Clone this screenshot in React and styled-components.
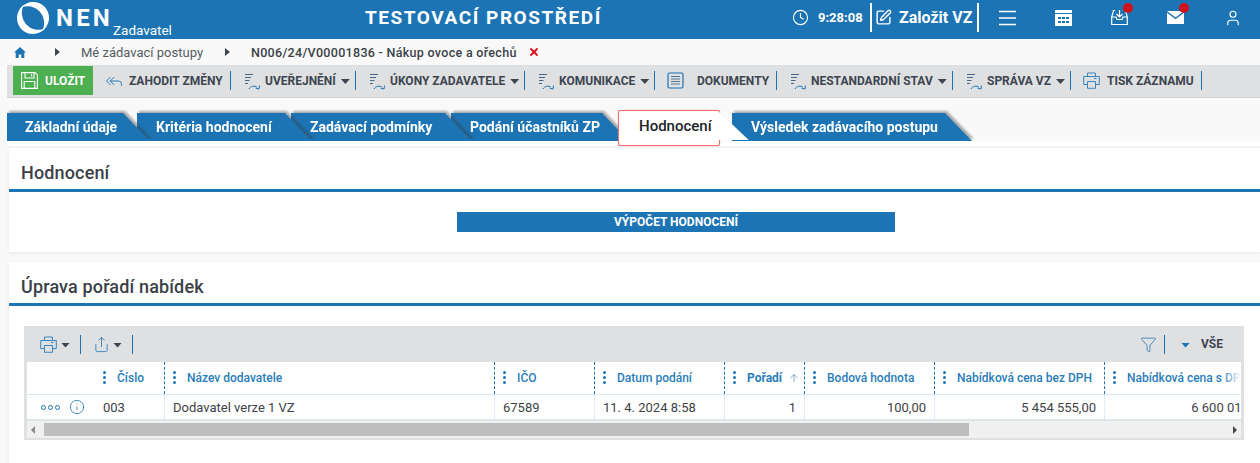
import React from "react";
import styled, { createGlobalStyle } from "styled-components";
import { ReplyAll, Share, Funnel, Info, Clock, SquarePen, User, ArrowUp, X } from "lucide-react";

const Global = createGlobalStyle`
  html, body { margin: 0; padding: 0; background: #f9f9f9; height: 100%; overflow: hidden; }
  * { box-sizing: border-box; }
  body { font-family: Roboto, "Liberation Sans", sans-serif; color: #3d4650; }
`;

const BLUE = "#1c74b4";

const Page = styled.div`width: 1260px; height: 463px; overflow: hidden; display: flex; flex-direction: column;`;

const Header = styled.header`
  height: 39px; padding-bottom: 4px; background: ${BLUE}; color: #fff; display: grid;
  grid-template-columns: 365px 425px 470px; align-items: center; flex: none;
`;
const Brand = styled.div`display: flex; align-items: flex-start; padding-left: 15px; height: 35px;`;
const BrandName = styled.span`font-size: 24px; font-weight: 700; letter-spacing: 3.2px; margin: 3px 0 0 5px; line-height: 30px;`;
const BrandRole = styled.span`font-size: 13.5px; line-height: 16px; margin: 22px 0 0 0;`;
const EnvTitle = styled.div`font-size: 19px; font-weight: 700; letter-spacing: 1.55px; white-space: nowrap;`;
const HeaderRight = styled.div`display: flex; align-items: center; height: 35px; padding-left: 2px;`;
const TimeText = styled.span`font-size: 13px; font-weight: 700; margin: 0 8px 0 9px; width: 44px; flex: none;`;
const Create = styled.div`
  display: flex; align-items: center; gap: 7px; height: 29px; width: 109px; padding-left: 3px; flex: none;
  border-left: 2px solid #fff; border-right: 2px solid #fff; font-size: 16px; font-weight: 700; white-space: nowrap;
`;
const HeadIcons = styled.div`display: flex; align-items: center; padding-left: 20px;`;
const HeadIcon = styled.span`
  position: relative; display: flex; width: ${(p) => p.$w ?? 56}px; height: 20px; align-items: center; flex: none;
  margin-left: ${(p) => p.$ml ?? 0}px;
`;
const Dot = styled.i`
  position: absolute; top: -5px; left: ${(p) => p.$l}px; width: 10px; height: 10px; border-radius: 50%; background: #d0121b;
`;

const Crumbs = styled.nav`
  height: 26px; flex: none; display: flex; align-items: center; font-size: 13px; color: #555c63; padding-left: 14px;
`;
const Tri = styled.span`
  width: 0; height: 0; border-left: 5px solid #3d4650; border-top: 4px solid transparent; border-bottom: 4px solid transparent;
  margin: 0 ${(p) => p.$r}px 0 ${(p) => p.$l}px;
`;
const CrumbStrong = styled.b`font-weight: 500; font-size: 12.5px; color: #3a4148; letter-spacing: 0.3px;`;
const CrumbClose = styled.span`display: flex; margin-left: 11px; color: #e0101a;`;

const Toolbar = styled.div`
  height: 33px; margin-left: 7px; background: #dfe0e2; border-bottom: 1px solid #d2d3d5; flex: none;
  display: flex; align-items: center; padding: 0 0 1px 6px;
`;
const SaveBtn = styled.div`
  width: 80px; height: 29px; background: #4caf50; color: #fff; font-weight: 700; font-size: 12px;
  display: flex; align-items: center; gap: 7px; padding-left: 8px; margin-right: 12px; flex: none;
`;
const ToolItem = styled.div`
  display: flex; align-items: center; height: 19px; font-size: 12px; font-weight: 700; color: #3d4650; white-space: nowrap;
  gap: ${(p) => p.$gap ?? 5}px; width: ${(p) => p.$w}px; margin-right: 5px; flex: none;
  border-right: 1px solid ${BLUE};
  padding-left: ${(p) => p.$pl ?? 9}px;
`;
const Caret = styled.span`
  display: inline-block; width: 9px; height: 5px; margin-left: ${(p) => p.$ml ?? 0}px; flex: none;
  background: ${(p) => p.$c || "#3d4650"}; clip-path: polygon(0 0, 100% 0, 50% 100%);
  position: relative; top: 1px;
`;

const TabsRow = styled.div`
  display: flex; margin: 15px 0 0 7px; height: 35px; flex: none; align-items: flex-start; position: relative;
  background: linear-gradient(transparent 28px, #fff 28px, #fff 33px, #f4f4f4 33px);
`;
const TabWrap = styled.div`
  position: relative; flex: none; width: ${(p) => p.$w}px; margin: 0 ${(p) => p.$mr ?? 0}px 0 ${(p) => p.$ml ?? 0}px; z-index: ${(p) => p.$z};
  filter: drop-shadow(2px -1.5px 1px rgba(60, 60, 60, 0.42));
`;
const TabBody = styled.div`
  height: 28px; background: ${BLUE}; color: #fff; font-size: 14px; font-weight: 700; white-space: nowrap;
  line-height: 29px; padding-left: ${(p) => p.$pl}px;
  clip-path: polygon(0 0, calc(100% - 27px) 0, 100% 100%, 0 100%);
`;
const ActiveTab = styled.div`
  position: relative; z-index: 20; flex: none; width: 102px; height: 36px; margin: -3px 0 0 0; background: #fff; border: 1px solid #f26c74; border-radius: 2px;
  font-size: 15px; font-weight: 500; color: #202428; padding: 6px 0 0 20px; line-height: 18px; white-space: nowrap;
  box-shadow: 0 0 1px #f26c74;
`;
const ActiveFold = styled.div`
  position: absolute; left: 100%; top: 1px; width: 30px; height: 28px; background: linear-gradient(45deg, #fff 48%, #cfcfcf 52%, #f9f9f9 62%);
  clip-path: polygon(0 0, 100% 100%, 0 100%);
`;

const Card = styled.section`
  margin-left: 9px; background: #fff; box-shadow: 0 1px 3px rgba(0,0,0,.08); height: ${(p) => p.$h}px; flex: none;
  margin-bottom: ${(p) => p.$mb ?? 0}px;
`;
const CardTitle = styled.h2`
  margin: 0; font-size: 18px; font-weight: 500; color: #3a4047; height: 44px; line-height: 1; padding: 16px 0 0 12px;
  border-bottom: 3px solid ${BLUE};
  letter-spacing: 0.15px;
`;
const ActionRow = styled.div`display: flex; justify-content: center; padding: 20px 0 0 84px; margin-left: -1px;`;
const ActionBtn = styled.div`
  width: 438px; height: 20px; background: ${BLUE}; color: #fff; font-size: 12px; font-weight: 700; text-align: center; line-height: 21px;
`;

const GridBox = styled.div`
  margin: 20px 16px 0 15px; background: #dfe0e2; height: 114px; padding: 0 3px 3px 3px;
`;
const GridTools = styled.div`height: 36px; display: flex; align-items: center; padding-left: 13px; color: ${BLUE};`;
const GridToolBtn = styled.div`
  display: flex; align-items: center; height: 19px; width: ${(p) => p.$w}px; border-right: 1px solid ${BLUE}; margin-right: ${(p) => p.$mr}px;
`;
const Spacer = styled.div`flex: 1;`;
const AllLabel = styled.span`
  font-size: 12px; font-weight: 700; color: #3d4650; margin: 0 18px 0 7px; height: 19px; padding-left: 16px;
  border-left: 1px solid ${BLUE}; display: flex; align-items: center; gap: 11px;
`;
const Table = styled.div`background: #fff; position: relative; overflow: hidden;`;
const Row = styled.div`
  display: grid; grid-template-columns: 68px 69px 330px 100px 130px 80px 130px 170px 170px; height: ${(p) => p.$h}px;
  border-bottom: 1px solid #dce8f0; width: 1247px;
`;
const HeadCell = styled.div`
  display: flex; align-items: center; font-size: 12px; font-weight: ${(p) => (p.$b ? 700 : 500)}; color: #2a7db9; white-space: nowrap; overflow: hidden;
  padding-left: 8px; border-left: ${(p) => (p.$first ? "none" : `1px dashed ${BLUE}`)};
`;
const Grip = styled.span`
  display: flex; flex-direction: column; gap: 2px; margin: -1px 11px 0 0; flex: none;
  i { display: block; width: 3px; height: 3px; border-radius: 50%; background: ${BLUE}; }
`;
const Cell = styled.div`
  font-size: 13px; color: #3d4246; white-space: nowrap; overflow: hidden; display: flex; align-items: center;
  padding: 0 ${(p) => (p.$right ? 8 : 0)}px 0 ${(p) => p.$pl ?? 8}px; border-left: ${(p) => (p.$first ? "none" : "1px dotted #c4dced")};
  justify-content: ${(p) => (p.$right ? "flex-end" : "flex-start")};
`;
const HeadFade = styled.div`
  position: absolute; right: 0; top: 0; height: 32px; width: 20px; background: linear-gradient(90deg, rgba(255,255,255,0), #fff);
`;
const Rings = styled.span`display: flex; gap: 2px; margin: 0 9px 0 6px; i { width: 5px; height: 5px; border: 1px solid ${BLUE}; border-radius: 50%; display: block; }`;
const Scrollbar = styled.div`height: 18px; background: #f0f0f0; display: flex; align-items: center; border-top: 1px solid #e4e4e4;`;
const ScrollThumb = styled.div`width: 925px; height: 13px; background: #bebebe; margin-left: 5px;`;
const ArrowSlot = styled.span`width: 12px; display: flex; justify-content: center; flex: none;`;
const ScrollTri = styled.span`
  width: 0; height: 0; border-top: 4px solid transparent; border-bottom: 4px solid transparent;
  ${(p) => (p.$left ? "border-right: 4px solid #8a8a8a;" : "border-left: 4px solid #444;")}
`;

const crescent = "M-9 -13.2 A16 16 0 1 0 12 10.6 A16.8 16.8 0 0 1 -9 -13.2 Z";
const Logo = () => (
  <svg width="36" height="36" viewBox="-18 -18 36 36" style={{ flex: "none" }}>
    <path d={crescent} fill="#fff" />
    <path d={crescent} fill="#fff" transform="rotate(180)" />
  </svg>
);
const FlowIcon = () => (
  <svg width="15" height="17" viewBox="0 0 15 17" fill="none" style={{ flex: "none", marginTop: 2 }}>
    <path d="M0 1.5h8M0 4.5h6M0 7.5h4.5M0 10.5h3" stroke="#44688a" strokeWidth="1" />
    <path d="M4 16c1.5-3 6-3.8 8-1.6M14.5 12.5l-.5 3.5-3.3-.8" stroke="#1c74b4" strokeWidth="1" />
  </svg>
);
const SaveIcon = () => (
  <svg width="17" height="17" viewBox="0 0 17 17" fill="none" stroke="#fff" strokeWidth="1.1" style={{ flex: "none" }}>
    <path d="M.6.6h13.5l2.3 2.3v13.5H.6zM4 .6v5.4h9V.6M3.2 16.4V9.5h10.6v6.9M10.5 2v2.5" />
  </svg>
);
const DocIcon = () => (
  <svg width="17" height="17" viewBox="0 0 17 17" fill="none" stroke="#1c74b4" style={{ flex: "none" }}>
    <rect x="1" y="1" width="15" height="15" rx="1.5" strokeWidth="1.2" />
    <path d="M4 4.5h9M4 7h9M4 9.5h9M4 12h9" stroke="#44688a" strokeWidth="0.9" />
  </svg>
);
const MenuIcon = () => (
  <svg width="17" height="16" viewBox="0 0 17 16" fill="none" stroke="#fff" strokeWidth="1.6"><path d="M0 1.5h17M0 8h17M0 14.5h17" /></svg>
);
const CalIcon = () => (
  <svg width="17" height="16" viewBox="0 0 17 16"><path fill="#fff" d="M0 0h17v16H0z" /><path fill="#1c74b4" d="M0 3h17v1H0zM3 7h3v2H3zM7 7h3v2H7zM11 7h3v2h-3zM3 11h3v2H3zM7 11h3v2H7zM11 11h3v2h-3z" /></svg>
);
const InboxIcon = () => (
  <svg width="17" height="17" viewBox="0 0 17 17" fill="none" stroke="#fff" strokeWidth="1.2">
    <path d="M4 1.5H2.5L.7 8v7.5h15.6V8l-1.8-6.5H13M.7 8H5l1 2.5h5L12 8h4.3M8.5 1v7M5.5 5l3 3 3-3" />
  </svg>
);
const MailIcon = () => (
  <svg width="17" height="13" viewBox="0 0 17 13"><path fill="#fff" d="M0 0h17L8.5 6.5zM0 1.8l8.5 6.5L17 1.8V13H0z" /></svg>
);
const TablePrint = () => (
  <svg width="17" height="17" viewBox="0 0 17 17" fill="none" stroke="#3a87bf" strokeWidth="1" style={{ flex: "none" }}>
    <path d="M4.5 4V1h8v3M4 12.5H.7V4.5h15.6v8H13M4.5 9.5h8v6.8h-8zM11 6.5h2.5" />
  </svg>
);

const cols = [
  ["Číslo", false], ["Název dodavatele", false], ["IČO", false], ["Datum podání", false],
  ["Pořadí", true], ["Bodová hodnota", false], ["Nabídková cena bez DPH", false], ["Nabídková cena s DPH", false],
];

export default function App() {
  return (
    <Page>
      <Global />
      <Header>
        <Brand>
          <Logo />
          <BrandName>NEN</BrandName>
          <BrandRole>Zadavatel</BrandRole>
        </Brand>
        <EnvTitle>TESTOVACÍ PROSTŘEDÍ</EnvTitle>
        <HeaderRight>
          <Clock size={17} strokeWidth={1.6} style={{ flex: "none" }} />
          <TimeText>9:28:08</TimeText>
          <Create><SquarePen size={17} strokeWidth={2} style={{ flex: "none" }} />Založit VZ</Create>
          <HeadIcons>
            <HeadIcon><MenuIcon /></HeadIcon>
            <HeadIcon><CalIcon /></HeadIcon>
            <HeadIcon><InboxIcon /><Dot $l={12} /></HeadIcon>
            <HeadIcon><MailIcon /><Dot $l={12} /></HeadIcon>
            <HeadIcon $w={20} $ml={1}><User size={18} strokeWidth={1.5} /></HeadIcon>
          </HeadIcons>
        </HeaderRight>
      </Header>

      <Crumbs>
        <svg width="12" height="11" viewBox="0 0 12 11" style={{ flex: "none" }}><path fill="#1c74b4" d="M6 0l6 5.5h-1.7V11H7.3V7.5H4.7V11H1.7V5.5H0z" /></svg>
        <Tri $l={29} $r={21} />
        Mé zádavací postupy
        <Tri $l={22} $r={21} />
        <CrumbStrong>N006/24/V00001836 - Nákup ovoce a ořechů</CrumbStrong>
        <CrumbClose><X size={12} strokeWidth={3.6} /></CrumbClose>
      </Crumbs>

      <Toolbar>
        <SaveBtn><SaveIcon />ULOŽIT</SaveBtn>
        <ToolItem $w={126} $pl={0} $gap={6}><ReplyAll size={18} strokeWidth={1.2} color="#1c74b4" style={{ flex: "none" }} />ZAHODIT ZMĚNY</ToolItem>
        <ToolItem $w={120}><FlowIcon />UVEŘEJNĚNÍ<Caret /></ToolItem>
        <ToolItem $w={164}><FlowIcon />ÚKONY ZADAVATELE<Caret /></ToolItem>
        <ToolItem $w={125}><FlowIcon />KOMUNIKACE<Caret /></ToolItem>
        <ToolItem $w={117} $pl={7} $gap={13}><DocIcon />DOKUMENTY</ToolItem>
        <ToolItem $w={171}><FlowIcon />NESTANDARDNÍ STAV<Caret /></ToolItem>
        <ToolItem $w={113}><FlowIcon />SPRÁVA VZ<Caret /></ToolItem>
        <ToolItem $w={126} $pl={7} $gap={7}><TablePrint />TISK ZÁZNAMU</ToolItem>
      </Toolbar>

      <TabsRow>
        <TabWrap $w={143} $mr={-13} $z={9}><TabBody $pl={18}>Základní údaje</TabBody></TabWrap>
        <TabWrap $w={175} $mr={-21} $z={8}><TabBody $pl={19}>Kritéria hodnocení</TabBody></TabWrap>
        <TabWrap $w={181} $mr={-21} $z={7}><TabBody $pl={19}>Zadávací podmínky</TabBody></TabWrap>
        <TabWrap $w={178} $mr={-11} $z={6}><TabBody $pl={19}>Podání účastníků ZP</TabBody></TabWrap>
        <ActiveTab>Hodnocení<ActiveFold /></ActiveTab>
        <TabWrap $w={240} $ml={12} $z={5}><TabBody $pl={19}>Výsledek zadávacího postupu</TabBody></TabWrap>
      </TabsRow>

      <Card $h={104} $mb={10}>
        <CardTitle>Hodnocení</CardTitle>
        <ActionRow><ActionBtn>VÝPOČET HODNOCENÍ</ActionBtn></ActionRow>
      </Card>

      <Card $h={208}>
        <CardTitle>Úprava pořadí nabídek</CardTitle>
        <GridBox>
          <GridTools>
            <GridToolBtn $w={41} $mr={12}><TablePrint /><Caret $ml={4} /></GridToolBtn>
            <GridToolBtn $w={40} $mr={0}><Share size={17} strokeWidth={1.1} style={{ flex: "none" }} /><Caret $ml={3} /></GridToolBtn>
            <Spacer />
            <Funnel size={17} strokeWidth={1.1} />
            <AllLabel><Caret $c="#1c74b4" />VŠE</AllLabel>
          </GridTools>
          <Table>
            <Row $h={33}>
              <HeadCell $first />
              {cols.map(([c, b], i) => (
                <HeadCell key={c} $first={i === 0} $b={b}>
                  <Grip><i /><i /><i /></Grip>
                  {c}
                  {b && <ArrowUp size={12} strokeWidth={1.2} style={{ marginLeft: 6, flex: "none" }} />}
                </HeadCell>
              ))}
            </Row>
            <Row $h={25}>
              <Cell $first $pl={8}><Rings><i /><i /><i /></Rings><Info size={16} strokeWidth={1.2} color="#1c74b4" style={{ flex: "none" }} /></Cell>
              <Cell $first>003</Cell>
              <Cell>Dodavatel verze 1 VZ</Cell>
              <Cell>67589</Cell>
              <Cell>11. 4. 2024 8:58</Cell>
              <Cell $right>1</Cell>
              <Cell $right>100,00</Cell>
              <Cell $right>5 454 555,00</Cell>
              <Cell $right>6 600 011,55</Cell>
            </Row>
            <HeadFade />
            <Scrollbar>
              <ArrowSlot><ScrollTri $left /></ArrowSlot>
              <ScrollThumb />
              <Spacer />
              <ArrowSlot><ScrollTri /></ArrowSlot>
            </Scrollbar>
          </Table>
        </GridBox>
      </Card>
    </Page>
  );
}
